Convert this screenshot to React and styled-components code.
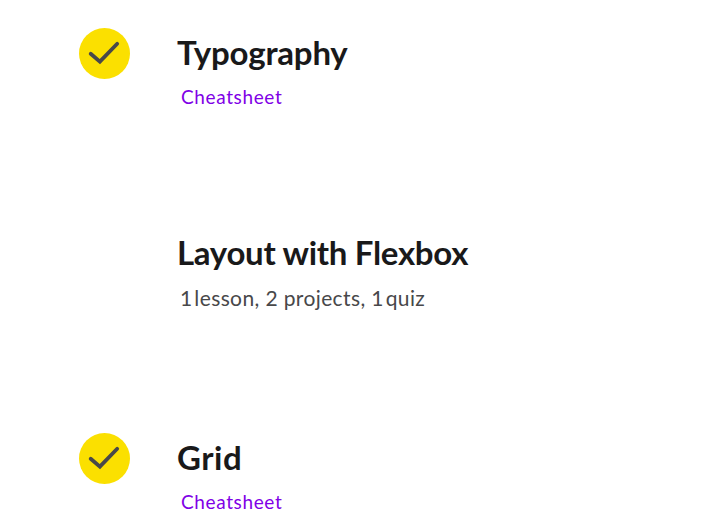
import React from 'react';
import styled, { createGlobalStyle } from 'styled-components';

const GlobalStyle = createGlobalStyle`
  body { margin: 0; background: #fff; overflow: hidden; }
`;

const Syllabus = styled.main`
  box-sizing: border-box;
  width: 703px;
  height: 520px;
  padding: 28px 0 0 79px;
  overflow: hidden;
  font-family: Lato, sans-serif;
`;

const Unit = styled.section`
  display: grid;
  grid-template-columns: 51px 1fr;
  column-gap: 48px;
  height: ${(p) => p.$height}px;
`;

const Status = styled.svg`
  display: block;
  width: 51px;
  height: 51px;
`;

const Title = styled.h2`
  margin: 0 0 0 -1px;
  padding: 4px 0 1px;
  height: 40px;
  line-height: 40px;
  font-size: 33px;
  font-weight: 700;
  letter-spacing: ${(p) => p.$spacing}px;
  color: #19191a;
  white-space: nowrap;
`;

const Cheatsheet = styled.a`
  display: block;
  width: fit-content;
  margin: 12px 0 0 3px;
  line-height: 24px;
  font-size: 19px;
  letter-spacing: 0.63px;
  color: #8000e6;
  text-decoration: none;
`;

const Summary = styled.p`
  margin: 11px 0 0 2px;
  line-height: 28px;
  font-size: 21px;
  letter-spacing: 0.38px;
  color: #48484a;
  white-space: nowrap;
`;

const NarrowOne = styled.span`
  letter-spacing: -3.6px;
`;

const units = [
  { title: 'Typography', done: true, height: 200, spacing: -0.2 },
  {
    title: 'Layout with Flexbox',
    summary: (
      <>
        <NarrowOne>1</NarrowOne> lesson, 2 projects, <NarrowOne>1</NarrowOne> quiz
      </>
    ),
    height: 205,
    spacing: -0.29,
  },
  { title: 'Grid', done: true, height: 87, spacing: 0.5 },
];

const CheckMark = () => (
  <Status viewBox="0 0 51 51" role="img" aria-label="Completed">
    <circle cx="25.5" cy="25.5" r="25.5" fill="#fbe000" />
    <path d="M11.7 25.7 L20.9 33.6 L38.2 15.8" fill="none" stroke="#48484a" strokeWidth="3.8" strokeLinecap="round" strokeLinejoin="miter" />
  </Status>
);

export default function App() {
  return (
    <>
      <GlobalStyle />
      <Syllabus>
        {units.map((u) => (
          <Unit key={u.title} $height={u.height}>
            <div>{u.done && <CheckMark />}</div>
            <div>
              <Title $spacing={u.spacing}>{u.title}</Title>
              {u.summary ? <Summary>{u.summary}</Summary> : <Cheatsheet>Cheatsheet</Cheatsheet>}
            </div>
          </Unit>
        ))}
      </Syllabus>
    </>
  );
}
